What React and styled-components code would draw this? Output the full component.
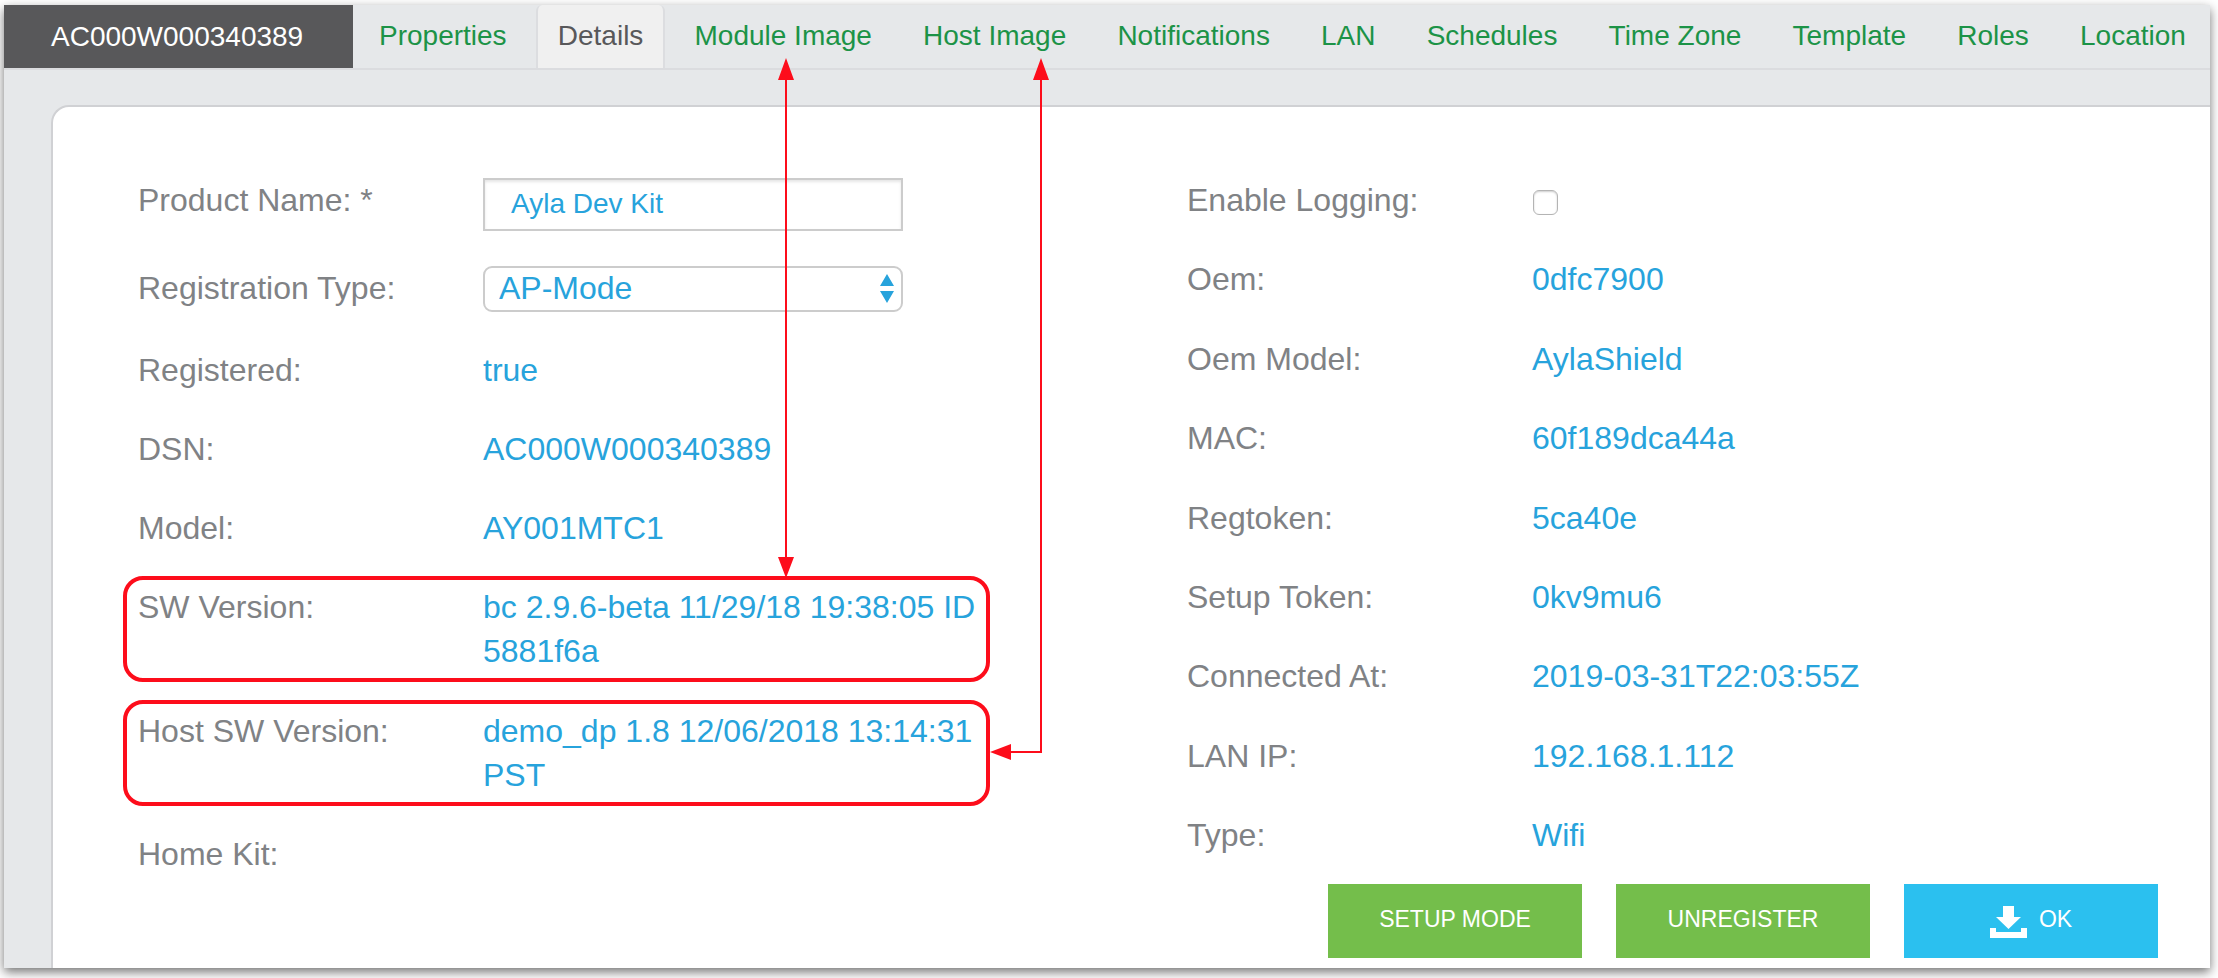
import React from "react";
import styled, { createGlobalStyle, css } from "styled-components";

const GlobalStyle = createGlobalStyle`
  *, *::before, *::after { box-sizing: border-box; }
  body {
    margin: 0;
    background: #fff;
    font-family: "Liberation Sans", Arial, Helvetica, sans-serif;
  }
`;

const Page = styled.div`
  min-height: 100vh;
  padding: 5px 8px 10px 4px;
  display: flex;
`;

const Shell = styled.div`
  position: relative;
  flex: 1;
  display: flex;
  flex-direction: column;
  background: #e6e8ea;
  box-shadow: 0 4px 10px rgba(0, 0, 0, 0.55);
`;

const TopBar = styled.header`
  display: flex;
  height: 65px;
  border-bottom: 2px solid #dbdcdf;
  font-size: 28px;
  line-height: 32px;
`;

const DeviceId = styled.h1`
  margin: 0;
  width: 349px;
  flex: none;
  padding: 16px 0 0 47px;
  background: #58585a;
  color: #fff;
  font-size: inherit;
  font-weight: 400;
`;

const Tabs = styled.nav`
  flex: 1;
  display: flex;
  justify-content: space-between;
  padding: 0 2px 0 4px;
`;

const Tab = styled.a`
  padding: 15px 20px 0;
  border: 2px solid transparent;
  border-width: 0 2px;
  color: #1c9347;
  text-decoration: none;
  white-space: nowrap;
  ${(p) =>
    p.$active &&
    css`
      background: #f0f0f0;
      border-color: #dcdde0;
      border-radius: 6px 6px 0 0;
      color: #58585a;
    `}
`;

const Panel = styled.form`
  flex: 1;
  display: flex;
  flex-direction: column;
  margin: 35px 0 0 47px;
  padding: 71px 52px 10px 85px;
  background: #fff;
  border: 2px solid #d0d1d4;
  border-width: 2px 0 0 2px;
  border-radius: 18px 0 0 0;
`;

const Columns = styled.div`
  flex: 1;
  display: grid;
  grid-template-columns: 1fr 1fr;
  column-gap: 78px;
  padding-bottom: 8px;
  font-size: 32px;
  line-height: 44px;
`;

const Column = styled.div`
  display: flex;
  flex-direction: column;
  justify-content: space-between;
  padding-bottom: ${(p) => p.$bottom || 0}px;
`;

const Row = styled.div`
  position: relative;
  display: grid;
  grid-template-columns: 345px 1fr;
  max-width: 852px;
  ${(p) =>
    p.$marked &&
    css`
      &::after {
        content: "";
        position: absolute;
        inset: -9px 0 -9px -15px;
        border: 4px solid #fd0d1b;
        border-radius: 20px;
        pointer-events: none;
      }
    `}
`;

const Label = styled.label`
  color: #808285;
`;

const Value = styled.output`
  color: #27a3dc;
`;

const TextInput = styled.input`
  width: 420px;
  height: 53px;
  padding: 0 26px 2px;
  border: 2px solid #ccc;
  border-radius: 0;
  box-shadow: inset 0 2px 3px rgba(0, 0, 0, 0.1);
  color: #27a3dc;
  font: 28px "Liberation Sans", Arial, sans-serif;
`;

const SelectWrap = styled.div`
  position: relative;
  width: 420px;
  height: 46px;
`;

const Select = styled.select`
  width: 100%;
  height: 100%;
  padding: 0 40px 2px 14px;
  appearance: none;
  background: #fff;
  border: 2px solid #ccc;
  border-radius: 9px;
  color: #27a3dc;
  font: 32px "Liberation Sans", Arial, sans-serif;
`;

const SelectArrows = styled.svg`
  position: absolute;
  top: 8px;
  right: 9px;
  pointer-events: none;
`;

const Checkbox = styled.input`
  appearance: none;
  width: 25px;
  height: 25px;
  margin: 12px 0 0 1px;
  background: #fff;
  border: 1px solid #b4b4b4;
  border-radius: 6px;
  box-shadow: inset 0 1px 2px rgba(0, 0, 0, 0.2);
`;

const Actions = styled.div`
  display: flex;
  justify-content: flex-end;
  gap: 34px;
`;

const ActionButton = styled.button`
  display: flex;
  align-items: center;
  justify-content: center;
  gap: 12px;
  width: 254px;
  height: 74px;
  padding: 0 0 4px;
  border: 0;
  background: ${(p) => (p.$primary ? "#2bc0ef" : "#74be4b")};
  color: #fff;
  font: 23px "Liberation Sans", Arial, sans-serif;
`;

const DownloadIcon = styled.svg`
  margin-top: 5px;
`;

const Callouts = styled.svg`
  position: absolute;
  top: 0;
  left: 0;
  pointer-events: none;
`;

const tabs = [
  "Properties", "Details", "Module Image", "Host Image", "Notifications", "LAN",
  "Schedules", "Time Zone", "Template", "Roles", "Location",
];

const leftFields = [
  ["Registered:", "true"],
  ["DSN:", "AC000W000340389"],
  ["Model:", "AY001MTC1"],
  ["SW Version:", "bc 2.9.6-beta 11/29/18 19:38:05 ID 5881f6a", true],
  ["Host SW Version:", "demo_dp 1.8 12/06/2018 13:14:31 PST", true],
  ["Home Kit:", ""],
];

const rightFields = [
  ["Oem:", "0dfc7900"],
  ["Oem Model:", "AylaShield"],
  ["MAC:", "60f189dca44a"],
  ["Regtoken:", "5ca40e"],
  ["Setup Token:", "0kv9mu6"],
  ["Connected At:", "2019-03-31T22:03:55Z"],
  ["LAN IP:", "192.168.1.112"],
  ["Type:", "Wifi"],
];

function Field({ label, value, marked }) {
  const id = label.toLowerCase().replace(/[^a-z]+/g, "-") + "value";
  return (
    <Row $marked={marked}>
      <Label htmlFor={id}>{label}</Label>
      <Value id={id}>{value}</Value>
    </Row>
  );
}

export default function App() {
  return (
    <Page>
      <GlobalStyle />
      <Shell>
        <TopBar>
          <DeviceId>AC000W000340389</DeviceId>
          <Tabs>
            {tabs.map((t) => (
              <Tab key={t} href="#" $active={t === "Details"}>{t}</Tab>
            ))}
          </Tabs>
        </TopBar>
        <Panel onSubmit={(e) => e.preventDefault()}>
          <Columns>
            <Column>
              <Row>
                <Label htmlFor="product-name">Product Name: *</Label>
                <TextInput id="product-name" defaultValue="Ayla Dev Kit" />
              </Row>
              <Row>
                <Label htmlFor="registration-type">Registration Type:</Label>
                <SelectWrap>
                  <Select id="registration-type" defaultValue="AP-Mode">
                    <option>AP-Mode</option>
                  </Select>
                  <SelectArrows width="14" height="29" viewBox="0 0 14 29" fill="#27a3dc">
                    <path d="M7 0 14 12H0zM0 17h14L7 29z" />
                  </SelectArrows>
                </SelectWrap>
              </Row>
              {leftFields.map(([l, v, m]) => (
                <Field key={l} label={l} value={v} marked={m} />
              ))}
            </Column>
            <Column $bottom={19}>
              <Row>
                <Label htmlFor="enable-logging">Enable Logging:</Label>
                <Checkbox id="enable-logging" type="checkbox" />
              </Row>
              {rightFields.map(([l, v]) => (
                <Field key={l} label={l} value={v} />
              ))}
            </Column>
          </Columns>
          <Actions>
            <ActionButton type="button">SETUP MODE</ActionButton>
            <ActionButton type="button">UNREGISTER</ActionButton>
            <ActionButton type="submit" $primary>
              <DownloadIcon width="37" height="32" viewBox="0 0 37 32" fill="#fff">
                <path d="M13 0h11v11h7L18.5 23 6 11h7zM0 22h6v4h25v-4h6v10H0z" />
              </DownloadIcon>
              OK
            </ActionButton>
          </Actions>
        </Panel>
        <Callouts width="1100" height="800" viewBox="0 0 1100 800" fill="#fd0d1b">
          <path d="M782 70V560M1037 70V747H1000" fill="none" stroke="#fd0d1b" strokeWidth="2" />
          <path d="M782 53l8 22h-16zM782 573l-8-21h16zM1037 53l8 22h-16zM986 747l21-8v16z" />
        </Callouts>
      </Shell>
    </Page>
  );
}
